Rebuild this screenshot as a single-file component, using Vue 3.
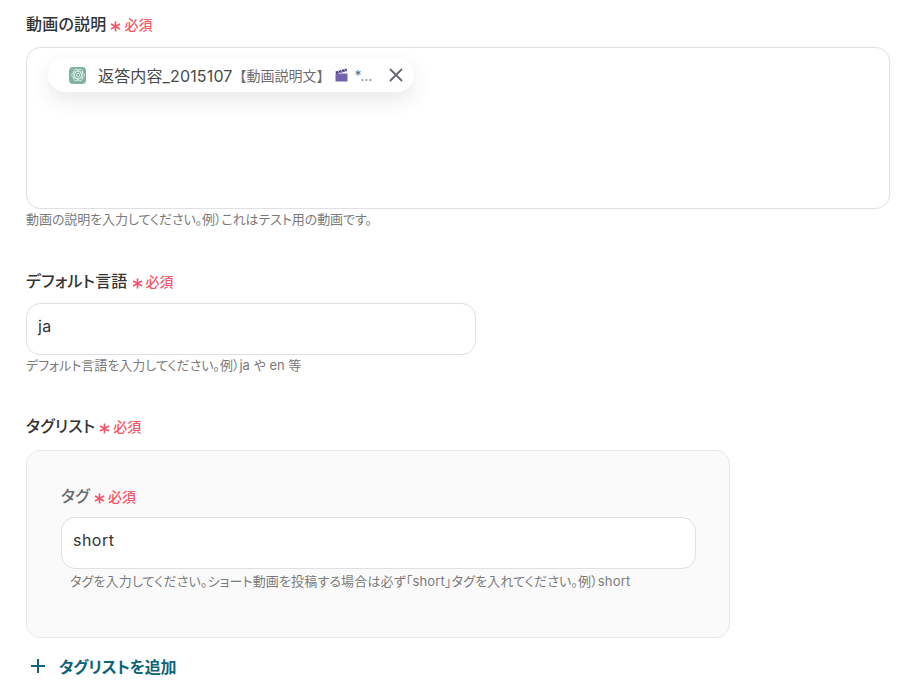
<script setup>
const hintMain = '動画の説明を入力してください。例）これはテスト用の動画です。'
</script>

<template>
  <main class="page">
    <section class="field first">
      <div class="label-row">
        <span class="label">動画の説明</span>
        <span class="req">
          <svg class="star" width="11" height="11" viewBox="0 0 11 11" fill="none" stroke="#f4566a" stroke-width="1.7"><path d="M5.5 .5v10M1 3l9 5M10 3 1 8" /></svg>必須
        </span>
      </div>
      <div class="textarea">
        <div class="chip">
          <span class="gpt">
            <svg width="14" height="14" viewBox="0 0 24 24" fill="none" stroke="#dff0e9" stroke-width="1.5">
              <ellipse cx="12" cy="12" rx="11" ry="6" />
              <ellipse cx="12" cy="12" rx="11" ry="6" transform="rotate(60 12 12)" />
              <ellipse cx="12" cy="12" rx="11" ry="6" transform="rotate(120 12 12)" />
              <circle cx="12" cy="12" r="3" />
            </svg>
          </span>
          <span class="chip-name">返答内容_2015107</span>
          <span class="chip-value">【動画説明文】<svg class="clap" width="13" height="14" viewBox="0 0 13 14"><path d="M.5 5.5h12v8H.5z" fill="#7562ad" /><path d="M.5 3.4 11.4.4l.8 2.6L1.2 6z" fill="#4e3f82" /><path d="M3 2.8l1.6 2.2M6 2l1.6 2.2M9 1.2l1.6 2.2" stroke="#d9d3ea" stroke-width=".9" /></svg><span class="more">*…</span></span>
          <svg class="close" width="14" height="14" viewBox="0 0 14 14" fill="none" stroke="#666a6e" stroke-width="1.8">
            <path d="M1 1l12 12M13 1 1 13" />
          </svg>
        </div>
      </div>
      <p class="hint tight">{{ hintMain }}</p>
    </section>

    <section class="field second">
      <div class="label-row">
        <span class="label">デフォルト言語</span>
        <span class="req">
          <svg class="star" width="11" height="11" viewBox="0 0 11 11" fill="none" stroke="#f4566a" stroke-width="1.7"><path d="M5.5 .5v10M1 3l9 5M10 3 1 8" /></svg>必須
        </span>
      </div>
      <div class="input lang">ja</div>
      <p class="hint">デフォルト言語を入力してください。例）ja や en 等</p>
    </section>

    <section class="field third">
      <div class="label-row">
        <span class="label">タグリスト</span>
        <span class="req">
          <svg class="star" width="11" height="11" viewBox="0 0 11 11" fill="none" stroke="#f4566a" stroke-width="1.7"><path d="M5.5 .5v10M1 3l9 5M10 3 1 8" /></svg>必須
        </span>
      </div>
      <div class="panel">
        <div class="label-row">
          <span class="label muted">タグ</span>
          <span class="req">
            <svg class="star" width="11" height="11" viewBox="0 0 11 11" fill="none" stroke="#f4566a" stroke-width="1.7"><path d="M5.5 .5v10M1 3l9 5M10 3 1 8" /></svg>必須
          </span>
        </div>
        <div class="input">short</div>
        <p class="hint indented">タグを入力してください。ショート動画を投稿する場合は必ず「short」タグを入れてください。例）short</p>
      </div>
    </section>

    <button class="add" type="button">
      <svg width="16" height="16" viewBox="0 0 16 16" fill="none" stroke="#0f6577" stroke-width="2">
        <path d="M8 1v14M1 8h14" />
      </svg>
      <span>タグリストを追加</span>
    </button>
  </main>
</template>

<style scoped>
.page {
  width: 915px;
  height: 699px;
  box-sizing: border-box;
  padding: 14px 25px 0 26px;
  overflow: hidden;
  background: #fff;
  font-family: Inter, "Noto Sans CJK JP", sans-serif;
  font-feature-settings: "palt";
  color: #333;
}
.label-row {
  display: flex;
  align-items: center;
  height: 20px;
  gap: 4px;
}
.label {
  font-size: 16px;
  font-weight: 500;
  line-height: 20px;
  letter-spacing: 0.2px;
}
.label.muted {
  color: #6b6b6b;
}
.req {
  display: flex;
  align-items: center;
  font-size: 14px;
  font-weight: 500;
  color: #f4566a;
  line-height: 20px;
  padding-top: 2px;
}
.star {
  margin: 2px 3px 0 0;
}
.textarea {
  margin-top: 13px;
  height: 162px;
  box-sizing: border-box;
  border: 1px solid #dfdfe6;
  border-radius: 14px;
  padding: 10px 21px;
}
.chip {
  display: inline-flex;
  align-items: center;
  width: 366px;
  height: 34px;
  box-sizing: border-box;
  padding: 0 11px 0 21px;
  border-radius: 17px;
  background: #fff;
  box-shadow: 0 8px 20px rgba(40, 40, 60, 0.1);
}
.gpt {
  flex: none;
  width: 17px;
  height: 17px;
  border-radius: 4px;
  background: #7fb2a0;
  display: flex;
  align-items: center;
  justify-content: center;
}
.chip-name {
  flex: none;
  margin-left: 12px;
  font-size: 16px;
  letter-spacing: 0.15px;
  color: #4a4a4a;
  white-space: nowrap;
}
.chip-value {
  flex: 1;
  min-width: 0;
  font-size: 14px;
  font-feature-settings: normal;
  color: #6e6e6e;
  white-space: nowrap;
  overflow: hidden;
}
.clap {
  vertical-align: -1px;
  margin: 0 7px 0 4px;
}
.more {
  letter-spacing: 0.5px;
}
.close {
  flex: none;
  margin-left: 8px;
}
.hint {
  margin: 2px 0 0;
  font-size: 13px;
  line-height: 16px;
  color: #7a7a7a;
  white-space: nowrap;
}
.hint.tight {
  letter-spacing: -0.07px;
}
.hint.indented {
  margin-top: 4px;
  padding-left: 9px;
  letter-spacing: 0.15px;
}
.second {
  margin-top: 44px;
}
.third {
  margin-top: 43px;
}
.input {
  margin-top: 12px;
  height: 52px;
  box-sizing: border-box;
  border: 1px solid #dfdfe6;
  border-radius: 14px;
  background: #fff;
  padding: 0 11px 7px;
  display: flex;
  align-items: center;
  font-size: 16px;
  letter-spacing: 0.03em;
  color: #333;
}
.lang {
  width: 450px;
}
.panel {
  margin-top: 14px;
  width: 704px;
  height: 188px;
  box-sizing: border-box;
  padding: 35px 33px 0 34px;
  border: 1px solid #e8e8e8;
  border-radius: 14px;
  background: #fafafa;
}
.panel .input {
  margin-top: 11px;
}
.add {
  display: flex;
  align-items: center;
  gap: 13px;
  margin: 16px 0 0 4px;
  padding: 0;
  border: 0;
  background: none;
  font-family: inherit;
  font-feature-settings: inherit;
  font-size: 16px;
  font-weight: 700;
  letter-spacing: -0.25px;
  color: #0f6577;
}
</style>

<style>
body { margin: 0; }
</style>
